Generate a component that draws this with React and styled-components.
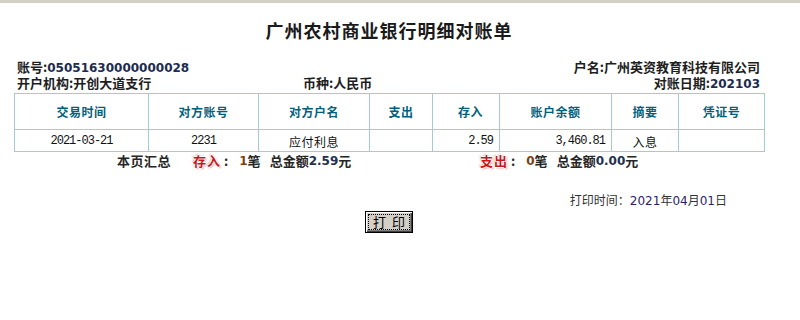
import React from "react";
import styled, { createGlobalStyle } from "styled-components";

const GlobalStyle = createGlobalStyle`
  html, body {
    margin: 0;
    padding: 0;
    background: #ffffff;
    font-family: "Noto Sans CJK SC", "DejaVu Sans", sans-serif;
  }
`;

const rows = [
  {
    date: "2021-03-21",
    account: "2231",
    name: "应付利息",
    out: "",
    income: "2.59",
    balance: "3,460.81",
    memo: "入息",
    voucher: "",
  },
];

const App = () => {
  return (
    <>
      <GlobalStyle />
      <TopBar />
      <Page>
        {/* title */}
        <Title>广州农村商业银行明细对账单</Title>

        {/* account info */}
        <InfoRowTop>
          <Info>
            账号:<Num>05051630000000028</Num>
          </Info>
          <Info>户名:广州英资教育科技有限公司</Info>
        </InfoRowTop>
        <InfoRowBottom>
          <Info>开户机构:开创大道支行</Info>
          <Info>币种:人民币</Info>
          <Info>
            对账日期:<Num>202103</Num>
          </Info>
        </InfoRowBottom>

        {/* detail table */}
        <Table>
          <colgroup>
            <col style={{ width: 134 }} />
            <col style={{ width: 110 }} />
            <col style={{ width: 111 }} />
            <col style={{ width: 63 }} />
            <col style={{ width: 67 }} />
            <col style={{ width: 112 }} />
            <col style={{ width: 67 }} />
            <col style={{ width: 86 }} />
          </colgroup>
          <thead>
            <tr>
              <Th>交易时间</Th>
              <Th>对方账号</Th>
              <Th>对方户名</Th>
              <Th>支出</Th>
              <Th $align="right">存入</Th>
              <Th>账户余额</Th>
              <Th>摘要</Th>
              <Th>凭证号</Th>
            </tr>
          </thead>
          <tbody>
            {rows.map((r) => (
              <tr key={r.date + r.account}>
                <Td $mono>{r.date}</Td>
                <Td $mono>{r.account}</Td>
                <Td>{r.name}</Td>
                <Td $mono $align="right">{r.out}</Td>
                <Td $mono $align="right">{r.income}</Td>
                <Td $mono $align="right">{r.balance}</Td>
                <Td>{r.memo}</Td>
                <Td>{r.voucher}</Td>
              </tr>
            ))}
          </tbody>
        </Table>

        {/* page summary */}
        <SummaryRow>
          <SummaryLabel>本页汇总</SummaryLabel>
          <SummaryGroup $width={287}>
            <Badge>存入</Badge>:
            <Count>1</Count>笔<Gap />总金额<Amount>2.59</Amount>元
          </SummaryGroup>
          <SummaryGroup>
            <Badge>支出</Badge>:
            <Count>0</Count>笔<Gap />总金额<Amount>0.00</Amount>元
          </SummaryGroup>
        </SummaryRow>

        <PrintTime>
          打印时间：<DateNum>2021</DateNum>年<DateNum>04</DateNum>月
          <DateNum>01</DateNum>日
        </PrintTime>

        <ButtonRow>
          <PrintButton type="button">
            <FocusRing>打&nbsp;&nbsp;印</FocusRing>
          </PrintButton>
        </ButtonRow>
      </Page>
    </>
  );
};

const TopBar = styled.div`
  height: 3px;
  background: #d4d0c8;
`;

const Page = styled.div`
  width: 750px;
  margin-left: 14px;
  color: #222;
`;

const Title = styled.div`
  padding-top: 17px;
  height: 20px;
  line-height: 20px;
  text-align: center;
  font-size: 18px;
  font-weight: bold;
  letter-spacing: 1px;
  color: #1a1a1a;
`;

const InfoRowTop = styled.div`
  margin-top: 19px;
  display: flex;
  justify-content: space-between;
  padding: 0 4px 0 3px;
  height: 16px;
  line-height: 16px;
`;

const InfoRowBottom = styled.div`
  display: grid;
  grid-template-columns: 286px 1fr auto;
  padding: 0 4px 0 3px;
  height: 16px;
  line-height: 16px;
`;

const Info = styled.span`
  font-size: 13px;
  font-weight: bold;
  color: #1e1e1e;
  white-space: nowrap;
`;

const Num = styled.span`
  font-family: "DejaVu Sans", sans-serif;
  font-size: 12px;
  font-weight: bold;
  color: #1c2b4e;
`;

const Table = styled.table`
  margin-top: 2px;
  width: 750px;
  border-collapse: collapse;
  table-layout: fixed;
`;

const Th = styled.th`
  height: 35px;
  padding: 0 ${(p) => (p.$align === "right" ? "16px" : "0")} 0 0;
  border: 1px solid #a5c9d5;
  text-align: ${(p) => p.$align || "center"};
  font-size: 12px;
  font-weight: bold;
  letter-spacing: 0.5px;
  color: #035f7c;
`;

const Td = styled.td`
  height: 20px;
  padding: 1px ${(p) => (p.$align === "right" ? "6px" : "0")} 0 0;
  border: 1px solid #a5c9d5;
  text-align: ${(p) => p.$align || "center"};
  font-family: ${(p) =>
    p.$mono
      ? `"Liberation Mono", monospace`
      : `"Noto Sans CJK SC", sans-serif`};
  font-size: 12px;
  letter-spacing: ${(p) => (p.$mono ? "-1px" : "0.5px")};
  color: #111;
`;

const SummaryRow = styled.div`
  display: flex;
  align-items: center;
  padding-left: 103px;
  height: 18px;
  line-height: 18px;
  font-size: 13px;
  font-weight: bold;
  color: #262626;
`;

const SummaryLabel = styled.span`
  width: 76px;
  flex: none;
  letter-spacing: 0.5px;
`;

const SummaryGroup = styled.span`
  display: flex;
  align-items: center;
  flex: none;
  width: ${(p) => (p.$width ? `${p.$width}px` : "auto")};
  white-space: nowrap;
`;

const Badge = styled.span`
  color: #c8161b;
  font-size: 13px;
  font-weight: bold;
  margin-right: 3px;
  letter-spacing: 1px;
  text-shadow: 1px 0 0 #fff, -1px 0 0 #fff, 0 1px 0 #fff, 0 -1px 0 #fff,
    1px 1px 2px #e06a6a, -1px -1px 2px #e88a8a;
`;

const Count = styled.span`
  margin-left: 11px;
  font-family: "DejaVu Sans", sans-serif;
  font-size: 12px;
  color: #7a4214;
`;

const Amount = styled.span`
  font-family: "DejaVu Sans", sans-serif;
  font-size: 12px;
  color: #23304f;
`;

const Gap = styled.span`
  width: 9px;
`;

const PrintTime = styled.div`
  margin-top: 22px;
  padding-right: 37px;
  text-align: right;
  height: 16px;
  line-height: 16px;
  font-size: 12px;
  color: #333;
`;

const DateNum = styled.span`
  font-family: "DejaVu Sans", sans-serif;
  color: #2c1d66;
`;

const ButtonRow = styled.div`
  margin-top: 3px;
  display: flex;
  justify-content: center;
`;

const PrintButton = styled.button`
  width: 48px;
  height: 22px;
  padding: 2px;
  background: #d4d0c8;
  border: 1px solid #000;
  box-shadow: inset 1px 1px 0 #fff, inset -1px -1px 0 #404040,
    inset -2px -2px 0 #808080;
  font-family: "Noto Sans CJK SC", sans-serif;
  font-size: 13px;
  color: #000;
  cursor: pointer;
`;

const FocusRing = styled.span`
  display: block;
  height: 100%;
  box-sizing: border-box;
  border: 1px dotted #000;
  line-height: 14px;
`;

export default App;
